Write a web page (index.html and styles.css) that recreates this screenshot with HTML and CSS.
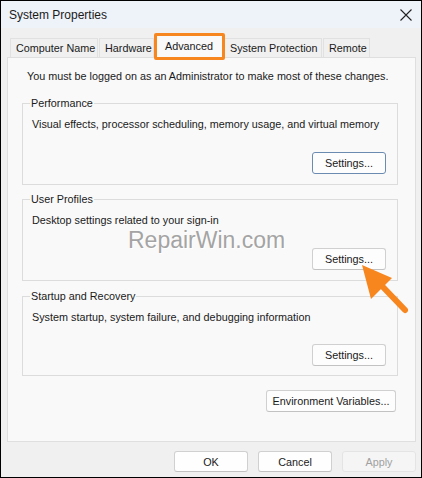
FILE: index.html
```html
<!DOCTYPE html>
<html>
<head>
<meta charset="utf-8">
<title>System Properties</title>
<link rel="stylesheet" href="styles.css">
</head>
<body>
<div class="window">
  <div class="titlebar">
    <span class="title">System Properties</span>
    <svg class="close" width="12" height="12" viewBox="0 0 12 12"><path d="M0.5 0.5 L11.5 11.5 M11.5 0.5 L0.5 11.5" stroke="#222" stroke-width="1.1" fill="none"/></svg>
  </div>
  <div class="content">
    <div class="tabs">
      <div class="tab t-name">Computer Name</div>
      <div class="tab t-hw">Hardware</div>
      <div class="tab t-adv selected">Advanced</div>
      <div class="tab t-sp">System Protection</div>
      <div class="tab t-rem">Remote</div>
    </div>
    <div class="highlight"></div>
    <div class="panel">
      <p class="admin">You must be logged on as an Administrator to make most of these changes.</p>
      <fieldset class="group">
        <legend>Performance</legend>
        <p class="desc">Visual effects, processor scheduling, memory usage, and virtual memory</p>
        <div class="btnrow"><button class="btn default">Settings...</button></div>
      </fieldset>
      <fieldset class="group">
        <legend>User Profiles</legend>
        <p class="desc">Desktop settings related to your sign-in</p>
        <div class="btnrow"><button class="btn">Settings...</button></div>
      </fieldset>
      <fieldset class="group g3">
        <legend>Startup and Recovery</legend>
        <p class="desc">System startup, system failure, and debugging information</p>
        <div class="btnrow"><button class="btn">Settings...</button></div>
      </fieldset>
      <div class="envrow"><button class="btn env">Environment Variables...</button></div>
    </div>
    <div class="footer">
      <button class="btn foot">OK</button>
      <button class="btn foot">Cancel</button>
      <button class="btn foot disabled">Apply</button>
    </div>
  </div>
  <div class="watermark">RepairWin.com</div>
  <svg class="arrow" width="60" height="60" viewBox="0 0 60 60">
    <line x1="22" y1="22" x2="45" y2="46" stroke="#f7861f" stroke-width="6" stroke-linecap="round"/>
    <polygon points="2,1 11,35 32,14" fill="#f7861f"/>
  </svg>
</div>
</body>
</html>
```
FILE: styles.css
```css
* { box-sizing: border-box; }
html, body { margin: 0; padding: 0; }
body {
  width: 422px;
  height: 478px;
  font-family: "Liberation Sans", Arial, sans-serif;
  font-size: 10.8px;
  color: #1a1a1a;
  background: #fff;
}
.window {
  position: relative;
  width: 422px;
  height: 478px;
  border: 1px solid #000;
  background: #f0f0f0;
  display: flex;
  flex-direction: column;
  overflow: hidden;
}
.titlebar {
  height: 27px;
  background: #eef2f9;
  display: flex;
  align-items: center;
  justify-content: space-between;
  padding: 0 8px 0 8px;
}
.title {
  font-size: 12px;
  color: #1b1b1b;
  margin-top: 1px;
}
.close { margin-right: 1px; }
.content {
  flex: 1;
  display: flex;
  flex-direction: column;
}
.tabs {
  display: flex;
  align-items: flex-end;
  margin: 8px 0 0 9px;
  height: 21px;
  position: relative;
  z-index: 1;
}
.tab {
  height: 19px;
  line-height: 18px;
  padding: 0 5px;
  background: #f0f0f0;
  border: 1px solid #e1e1e1;
  border-bottom: none;
  margin-right: 1px;
  color: #1a1a1a;
  white-space: nowrap;
}
.t-name { width: 88px; }
.t-hw { width: 55px; margin-right: 0; }
.t-adv { width: 70px; }
.t-sp { width: 98px; }
.t-rem { width: 47px; }
.tab.selected {
  height: 23px;
  line-height: 20px;
  background: #f9f9f9;
  border-color: #dcdcdc;
  margin-bottom: -1px;
  text-align: center;
  margin-right: 0;
}
.highlight {
  position: absolute;
  left: 153px;
  top: 32px;
  width: 71px;
  height: 27px;
  border: 3px solid #f7861f;
  border-radius: 2px;
  z-index: 2;
}
.panel {
  margin: 0 5px 0 6px;
  height: 385px;
  background: #f9f9f9;
  border: 1px solid #dfdfdf;
  padding: 11px 17px 0 14px;
}
.admin {
  margin: 0;
  line-height: 14px;
  padding-left: 5px;
}
.group {
  margin: 13px 0 0 0;
  padding: 0 11px 10px 7px;
  border: 1px solid #dcdcdc;
  min-width: 0;
}
.group + .group { margin-top: 7px; }
.group.g3 { margin-top: 8px; padding-bottom: 9px; }
.g3 .btnrow { margin-top: 20px; }
.group legend {
  padding: 0 1px;
  line-height: 14px;
}
.desc {
  margin: 7px 0 0 2px;
  line-height: 14px;
}
.btnrow {
  display: flex;
  justify-content: flex-end;
  margin-top: 21px;
}
.btn {
  font-family: "Liberation Sans", Arial, sans-serif;
  font-size: 10.8px;
  color: #1a1a1a;
  background: #fdfdfd;
  border: 1px solid #d0d0d0;
  border-bottom-color: #c2c2c2;
  border-radius: 3px;
  height: 22px;
  padding: 0;
  width: 74px;
  line-height: 20px;
}
.btn.default {
  border-color: #6b8cb0;
}
.envrow {
  display: flex;
  justify-content: flex-end;
  margin-top: 14px;
  padding-right: 2px;
}
.btn.env { width: 130px; }
.footer {
  display: flex;
  justify-content: flex-end;
  gap: 10px;
  padding: 9px 5px 0 0;
}
.btn.foot { width: 74px; height: 21px; background: #fefefe; }
.btn.disabled {
  color: #a0a0a0;
  background: #f5f5f5;
  border-color: #e4e4e4;
}
.watermark {
  position: absolute;
  left: 127px;
  top: 226px;
  font-size: 23px;
  color: #a4a4a4;
  text-shadow: 0 0 1px #fff, 1px 1px 0 #fff;
  pointer-events: none;
}
.arrow {
  position: absolute;
  left: 359px;
  top: 263px;
}
```
